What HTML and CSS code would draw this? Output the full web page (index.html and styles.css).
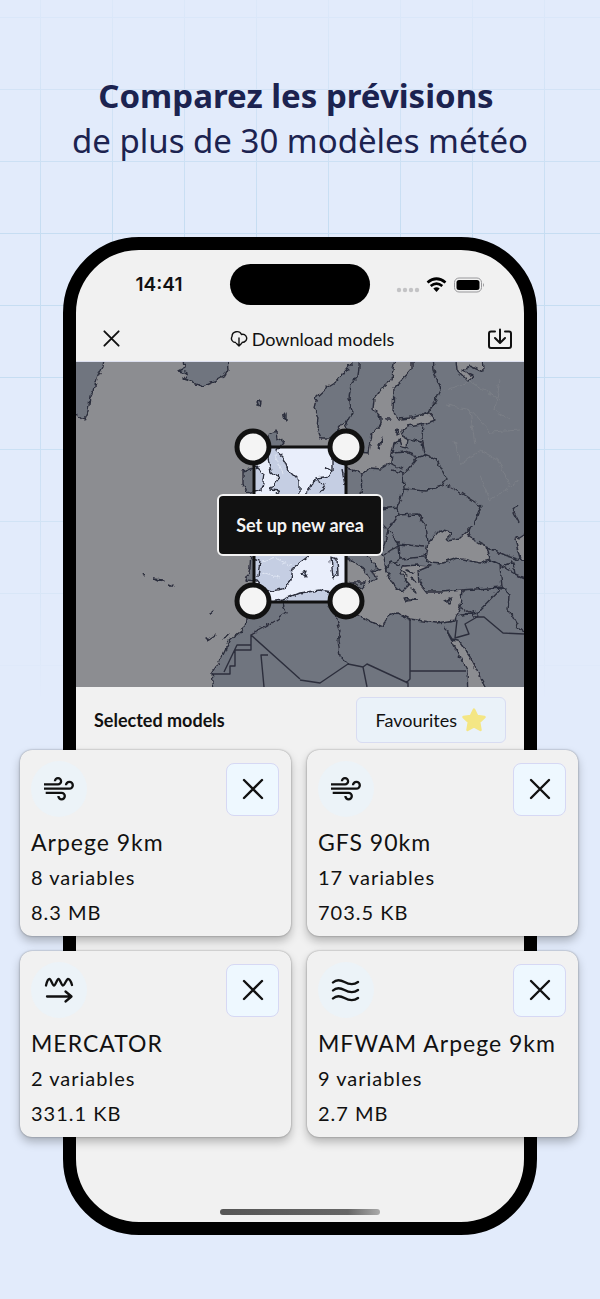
FILE: index.html
```html
<!DOCTYPE html>
<html lang="fr">
<head>
    <meta charset="UTF-8">
    <meta name="viewport" content="width=device-width, initial-scale=1.0">
    <title>Comparez les prévisions</title>
    <link rel="stylesheet" href="styles.css">
</head>
<body>
    <!-- Shared icons -->
    <svg class="sprite" aria-hidden="true">
        <symbol id="icon-close" viewBox="0 0 24 24">
            <path d="M3 3 21 21M21 3 3 21" fill="none" stroke="currentColor" stroke-width="2.4" stroke-linecap="round"/>
        </symbol>
        <symbol id="icon-wind" viewBox="0 0 32 26">
            <g fill="none" stroke="currentColor" stroke-width="2.3">
                <path d="M1 8.300H15A3.100 3.100 0 1 0 11.900 5.200"/>
                <path d="M1 12.700H26.400A3.400 3.400 0 1 0 23 9.300"/>
                <path d="M2.700 16.900H18.600A3.200 3.200 0 1 1 15.400 20.100"/>
            </g>
        </symbol>
        <symbol id="icon-current" viewBox="0 0 32 28">
            <g fill="none" stroke="currentColor" stroke-width="2.3" stroke-linecap="round" stroke-linejoin="round">
                <path d="M3 9.500C4 5 5 3 6.500 3S9.500 9.500 11 9.500S14 3 15.500 3S18.500 9.500 20 9.500S23.500 3 25 3S28 5.500 29 9"/>
                <path d="M4 20.500H28M22.500 15.500 28.500 20.500 22.500 25.500"/>
            </g>
        </symbol>
        <symbol id="icon-waves" viewBox="0 0 32 26">
            <g fill="none" stroke="currentColor" stroke-width="2.4" stroke-linecap="round">
                <path d="M3 5.500C6 2.500 10 2.500 14.500 5S24 8 28 5"/>
                <path d="M3 13.500C6 10.500 10 10.500 14.500 13S24 16 28 13"/>
                <path d="M3 21.500C6 18.500 10 18.500 14.500 21S24 24 28 21"/>
            </g>
        </symbol>
    </svg>

    <h1 class="headline"><strong>Comparez les prévisions</strong> de plus de 30 modèles météo</h1>

    <main class="phone">
        <div class="status-bar">
            <span class="clock">14:41</span>
            <span class="island"></span>
            <svg class="signals" width="88" height="20" viewBox="0 0 88 20" aria-hidden="true">
                <g fill="#c3c3c5">
                    <circle cx="3" cy="15" r="2.200"/><circle cx="9" cy="15" r="2.200"/>
                    <circle cx="15" cy="15" r="2.200"/><circle cx="21" cy="15" r="2.200"/>
                </g>
                <g fill="none" stroke="#000" stroke-width="2.700">
                    <path d="M31.500 7.500Q40.500 0 49.500 7.500"/>
                    <path d="M34.700 11Q40.500 6.300 46.300 11"/>
                </g>
                <path d="M37.300 13.500Q40.500 11 43.700 13.500L40.500 17Z"/>
                <rect x="58.500" y="3" width="27" height="14" rx="4.500" fill="none" stroke="#97979a"/>
                <rect x="60.500" y="5" width="23" height="10" rx="2.500"/>
                <path d="M87 8Q89 10 87 12Z" fill="#97979a"/>
            </svg>
        </div>

        <header class="app-bar">
            <button class="icon-btn" aria-label="Close"><svg width="19" height="19"><use href="#icon-close"/></svg></button>
            <h2>
                <svg width="18" height="18" viewBox="0 0 18 18" fill="none" stroke="currentColor" stroke-width="1.400" stroke-linecap="round" stroke-linejoin="round" aria-hidden="true">
                    <path d="M5.500 12.500A4 4 0 0 1 2 6.500A5 5 0 0 1 11.500 4.500A4 4 0 0 1 16 10.500Q14.500 12.500 12 12.500M9 8V16M6.500 13.500 9 16 11.500 13.500"/>
                </svg>
                Download models
            </h2>
            <button class="icon-btn" aria-label="Save to device">
                <svg width="26" height="22" viewBox="0 0 26 22" fill="none" stroke="currentColor" stroke-width="2" stroke-linecap="round" stroke-linejoin="round">
                    <path d="M8 3.500H4Q2 3.500 2 5.500V18Q2 20 4 20H22Q24 20 24 18V5.500Q24 3.500 22 3.500H18M13 1.500V14.500M8 10 13 15 18 10"/>
                </svg>
            </button>
        </header>

        <section class="map">
            <svg viewBox="76 362 448 325" aria-hidden="true">
                <defs>
                    <!-- breaks the smooth outlines into a ragged coast -->
                    <filter id="ragged" filterUnits="userSpaceOnUse" x="70" y="350" width="460" height="345">
                        <feTurbulence type="fractalNoise" baseFrequency="0.16" numOctaves="2" seed="4"/>
                        <feDisplacementMap in="SourceGraphic" scale="6" xChannelSelector="R" yChannelSelector="G"/>
                    </filter>
                    <clipPath id="area"><rect x="254" y="447" width="92" height="154"/></clipPath>
                    <g id="world" stroke-width="1.400" stroke-linejoin="round">
                        <g filter="url(#ragged)">
                            <g class="land">
                                <path d="M70 350H105L103 367 98 376 94 390 90 397 88 412 84 421 77 415 70 410Z"/>
                                <path d="M182 350 184 368 178 371 188 373 184 379 193 382 202 386 214 381 225 375 228 369 226 350Z"/>
                                <path d="M350 350 351 364 343 374 335 383 327 388 317 397 314 409 318 417 317 428 321 438 329 438 337 431 345 421 350 434 356 444 361 452 368 453 371 435 381 424 381 417 373 409 374 399 382 388 392 380 393 369 397 350Z"/>
                                <path d="M412 350 412 369 402 380 394 388 393 410 398 419 412 418 428 412 435 420 425 423 408 426 402 430 404 438 408 440 407 447 402 446 400 440 394 443 392 453 391 463 381 469 371 468 362 473 353 470 346 467 342 457 332 455 332 472 325 477 315 478 309 491 295 503 280 509 265 509 278 530 276 542 257 542 251 548 250 568 247 580 257 581 264 589 272 591 283 589 291 579 293 568 302 561 314 552 328 548 342 550 350 561 364 569 371 582 376 579 372 570 381 571 369 559 362 547 372 543 384 557 386 570 393 583 402 592 410 584 400 573 404 566 417 565 430 566 418 571 419 583 426 592 443 592 462 590 460 607 455 620 437 623 410 619 397 613 387 617 383 627 372 622 363 617 344 614 328 608 332 592 320 590 300 593 283 600 265 603 255 601 247 610 245 628 230 640 222 657 212 673 215 700H540V350Z"/>
                                <path d="M269 435 276 431 277 438 284 442 276 451 283 457 288 470 299 481 299 493 285 501 270 499 280 491 270 490 279 478 271 472 268 458Z"/>
                                <path d="M243 471 257 467 264 474 262 489 247 493 243 483Z"/>
                                <path d="M331 557 337 559 338 575 333 578Z"/>
                                <path d="M350 582H366L363 590Z"/>
                                <path d="M444 601 453 598 450 603ZM403 598 417 600 406 601Z"/>
                                <path d="M257 403 261 401 260 408 258 405ZM283 417 286 413 286 420ZM301 573 307 571 305 576ZM378 445 382 439 380 448Z"/>
                                <path d="M142 573 145 575ZM154 579 163 580 158 581ZM169 584 174 586 170 586ZM205 638H208V641ZM209 640 215 636ZM225 638 229 633ZM209 613 214 611ZM397 430 400 433 396 434ZM386 419H391Z"/>
                                <path d="M403 572 408 576ZM407 570 413 573ZM412 578 416 583ZM405 580 411 585ZM411 588 416 592Z"/>
                            </g>
                            <g class="sea">
                                <path d="M425 557 428 543 440 530 450 533 448 540 460 538 472 527 468 536 487 547 490 560 480 563 458 558 443 563 428 562Z"/>
                                <path d="M530 530 515 540 520 558 530 562ZM455 350 457 370 468 381 472 375 463 371 470 366 483 372 482 350Z"/>
                                <path d="M445 628 452 639 458 640 470 657 480 677 490 695H468L467 670 453 643Z"/>
                            </g>
                            <path class="region" d="M445 390 470 382 500 400M447 405 470 410 490 432 520 430M455 440 460 465 480 450 498 460 510 485M470 410 475 445M500 380 495 410 510 420M480 475 490 500 520 480M262 562 275 558 290 565M262 572 280 578M275 455 284 475"/>
                            <g class="border">
                                <path d="M360 355 358 377 351 384 349 398 352 412 346 424M433 355 434 371 441 390 434 404 427 414M423 424 422 436 425 455 418 457 409 468 403 473 391 470M404 438 422 442M392 453 405 452 418 457M391 463 402 469M362 473 361 498M403 473 404 488 397 507M425 455 437 460 446 478 442 486 426 491 404 489M446 485 459 492 481 506 474 525M397 507 381 509M397 507 398 515 418 514 426 525 428 543M398 515 388 530 399 544 425 547M384 555 399 545 400 559 424 557M385 570 391 562 400 565M383 525 389 531M350 499 370 507 381 509M348 525 365 530 370 544 384 548M487 547 505 555 520 560M490 560 500 565 502 587 462 590M500 565 515 574 524 578M502 587 510 595 509 610 518 627 524 632M460 606 476 617 478 612 502 587M458 616 478 612M518 505 513 510 519 522M314 478 325 485 320 492M325 468 332 472M342 470 345 485M335 600 337 620 341 632 338 640 340 656 348 664M283 602 286 613 276 620 262 628 251 634M252 558 260 560 258 577M388 530 383 550M391 565 400 559M515 574 513 562 505 565"/>
                            </g>
                        </g>
                        <path class="border" d="M212 674H230V666H235V650H251V635L300 679M251 645H237L224 672M264 687 261 655H268M300 680 320 683 348 664 363 667 367 664 408 683V687M363 667 367 687M410 619V679L406 683M410 671H466M475 617 484 617 503 633 524 634M457 620 455 638 469 634 465 624 477 617"/>
                    </g>
                </defs>
                <rect class="night-sea" x="76" y="362" width="448" height="325"/>
                <use class="night" href="#world"/>
                <g clip-path="url(#area)">
                    <rect class="day-sea" x="254" y="447" width="92" height="154"/>
                    <use class="day" href="#world"/>
                </g>
                <rect x="254" y="447" width="92" height="155" fill="none" stroke="#111" stroke-width="3"/>
                <g class="handles">
                    <circle cx="253" cy="447" r="16"/>
                    <circle cx="346" cy="447" r="16"/>
                    <circle cx="253" cy="601" r="16"/>
                    <circle cx="346" cy="601" r="16"/>
                </g>
            </svg>
            <button class="setup-btn">Set up new area</button>
        </section>

        <div class="toolbar">
            <h3>Selected models</h3>
            <button class="fav-btn">
                Favourites
                <svg width="26" height="26" viewBox="0 0 26 26" aria-hidden="true">
                    <path d="M13 2.500 16.200 9 23.500 10 18.200 15.200 19.500 23 13 19.500 6.500 23 7.800 15.200 2.500 10 9.800 9Z" fill="#f4e684" stroke="#f4e684" stroke-width="2.500" stroke-linejoin="round"/>
                </svg>
            </button>
        </div>

        <section class="models">
            <article class="card">
                <div class="card-head">
                    <span class="card-icon"><svg width="32" height="26"><use href="#icon-wind"/></svg></span>
                    <button class="remove-btn" aria-label="Remove Arpege 9km"><svg width="24" height="24"><use href="#icon-close"/></svg></button>
                </div>
                <h4>Arpege 9km</h4>
                <p>8 variables</p>
                <p>8.3 MB</p>
            </article>
            <article class="card">
                <div class="card-head">
                    <span class="card-icon"><svg width="32" height="26"><use href="#icon-wind"/></svg></span>
                    <button class="remove-btn" aria-label="Remove GFS 90km"><svg width="24" height="24"><use href="#icon-close"/></svg></button>
                </div>
                <h4>GFS 90km</h4>
                <p>17 variables</p>
                <p>703.5 KB</p>
            </article>
            <article class="card">
                <div class="card-head">
                    <span class="card-icon"><svg width="32" height="28"><use href="#icon-current"/></svg></span>
                    <button class="remove-btn" aria-label="Remove MERCATOR"><svg width="24" height="24"><use href="#icon-close"/></svg></button>
                </div>
                <h4>MERCATOR</h4>
                <p>2 variables</p>
                <p>331.1 KB</p>
            </article>
            <article class="card">
                <div class="card-head">
                    <span class="card-icon"><svg width="32" height="26"><use href="#icon-waves"/></svg></span>
                    <button class="remove-btn" aria-label="Remove MFWAM Arpege 9km"><svg width="24" height="24"><use href="#icon-close"/></svg></button>
                </div>
                <h4>MFWAM Arpege 9km</h4>
                <p>9 variables</p>
                <p>2.7 MB</p>
            </article>
        </section>

        <div class="home-indicator"></div>
    </main>
</body>
</html>
```

FILE: styles.css
```css
* {
    box-sizing: border-box;
}

body {
    margin: 0;
    padding: 73px 63px 64px;
    position: relative;
    min-height: 100vh;
    font-family: Lato, sans-serif;
    background: #e2ebfb;
    color: #111;
}

/* Fading grid behind the phone */
body::before {
    content: '';
    position: absolute;
    inset: 0 0 auto;
    height: 700px;
    background-image:
        linear-gradient(to right, #c6ddf2 1px, transparent 1px),
        linear-gradient(to bottom, #c6ddf2 1px, transparent 1px);
    background-size: 72px 72px;
    background-position: 40px 17px;
    -webkit-mask-image: linear-gradient(to bottom, rgba(0,0,0,0.2), #000 220px, #000 400px, transparent);
    mask-image: linear-gradient(to bottom, rgba(0,0,0,0.2), #000 220px, #000 400px, transparent);
}

h1, h2, h3, h4, p {
    margin: 0;
    font-weight: 400;
}

button {
    font-family: inherit;
    color: inherit;
    padding: 0;
    cursor: pointer;
}

svg {
    display: block;
}

.sprite {
    position: absolute;
    width: 0;
    height: 0;
}

.headline {
    position: relative;
    margin-bottom: 74px;
    font-family: "Noto Sans", sans-serif;
    font-size: 33px;
    line-height: 45px;
    text-align: center;
    color: #1c2350;
}

.headline strong {
    display: block;
    padding-right: 8px;
    font-weight: 700;
}

/* Phone */
.phone {
    position: relative;
    border: 13px solid #000;
    border-radius: 76px;
    background: #f1f1f1;
}

.status-bar {
    display: grid;
    grid-template-columns: 1fr 140px 1fr;
    align-items: center;
    padding: 14px 0 11px;
}

.clock {
    padding-left: 12px;
    justify-self: center;
    font-family: Inter, sans-serif;
    font-size: 19px;
    font-weight: 600;
}

.island {
    height: 41px;
    border-radius: 21px;
    background: #000;
}

.signals {
    justify-self: center;
    margin-right: 14px;
}

.app-bar {
    display: flex;
    justify-content: space-between;
    align-items: center;
    height: 46px;
    padding: 0 11px 0 26px;
    border-bottom: 1px solid #dcdfef;
}

.app-bar h2 {
    display: flex;
    align-items: center;
    gap: 4px;
    padding-left: 16px;
    font-size: 18px;
}

.icon-btn {
    border: none;
    background: none;
}

/* Map */
.map {
    position: relative;
}

.map > svg {
    width: 100%;
    height: auto;
}

.night-sea {
    fill: #8c8d91;
}

.day-sea {
    fill: #e9eefb;
}

.night {
    --land: #70757f;
    --sea: #8c8d91;
    --region: #7b7f87;
}

.day {
    --land: #c5cee3;
    --sea: #e9eefb;
    --region: #dde4f2;
}

.land {
    fill: var(--land);
    stroke: #2c2e3c;
}

.sea {
    fill: var(--sea);
    stroke: #2c2e3c;
}

.border {
    fill: none;
    stroke: #2c2e3c;
}

.region {
    fill: none;
    stroke: var(--region);
    stroke-width: 1;
}

.handles {
    fill: #f4f4f4;
    stroke: #111;
    stroke-width: 5;
}

.setup-btn {
    position: absolute;
    top: 50%;
    left: 50%;
    transform: translate(-50%, -50%);
    width: 166px;
    height: 62px;
    border: 2px solid #f4f4f4;
    border-radius: 6px;
    background: #111;
    color: #f4f4f4;
    font-size: 18px;
    font-weight: 700;
    white-space: nowrap;
}

/* Selected models */
.toolbar {
    display: flex;
    justify-content: space-between;
    align-items: center;
    padding: 10px 18px 7px;
}

.toolbar h3 {
    font-size: 18px;
    font-weight: 700;
}

.fav-btn {
    display: flex;
    align-items: center;
    gap: 4px;
    height: 46px;
    padding: 0 18px;
    border: 1px solid #d8dcf2;
    border-radius: 6px;
    background: #eaf2f9;
    font-size: 18px;
}

.models {
    display: grid;
    grid-template-columns: 1fr 1fr;
    gap: 15px 16px;
    margin: 0 -54px 0 -56px;
}

.card {
    padding: 11px 12px 6px 11px;
    border-radius: 12px;
    background: #f1f1f1;
    box-shadow: 0 0 2px rgba(0,0,0,0.4), 0 5px 10px rgba(0,0,0,0.25);
}

.card-head {
    display: flex;
    justify-content: space-between;
    align-items: center;
    margin-bottom: 7px;
}

.card-icon {
    display: flex;
    align-items: center;
    justify-content: center;
    width: 56px;
    height: 56px;
    border-radius: 50%;
    background: #ecf3f8;
}

.remove-btn {
    display: flex;
    align-items: center;
    justify-content: center;
    width: 53px;
    height: 53px;
    border: 1px solid #d6d8f4;
    border-radius: 8px;
    background: #eef8ff;
}

.card h4 {
    font-size: 23px;
    line-height: 36px;
    letter-spacing: 1px;
    white-space: nowrap;
}

.card p {
    font-size: 20px;
    line-height: 35px;
    letter-spacing: 1px;
}

.home-indicator {
    width: 160px;
    height: 6px;
    margin: 72px auto 7px;
    border-radius: 3px;
    background: linear-gradient(to right, #555, #666 80%, #aaa);
}
```
